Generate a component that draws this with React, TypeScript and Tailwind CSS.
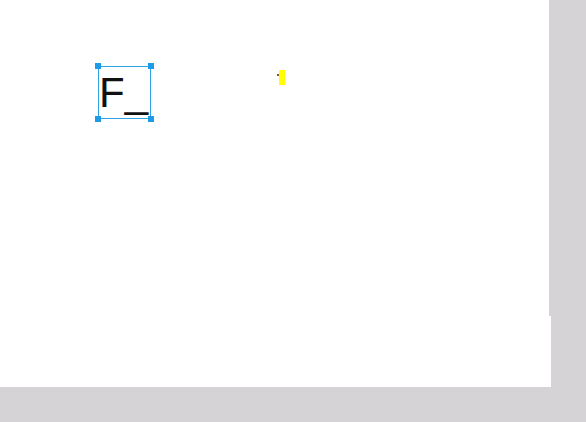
export default function App() {
  return (
    <div className="w-[586px] h-[422px] bg-[#d5d3d6] overflow-hidden">
      <div className="w-[549px] h-[316px] bg-white relative">
        {/* text box with selection handles */}
        <div className="absolute left-[98px] top-[66px] w-[53px] h-[53px] border border-[#2fa3e0] pt-[5px]">
          <span
            className="block text-[42px] leading-none text-[#111]"
            style={{ fontFamily: '"Liberation Sans", Arial, sans-serif' }}
          >
            F_
          </span>
          <div className="absolute -left-[4px] -top-[4px] w-[6px] h-[6px] bg-[#1b9be8]" />
          <div className="absolute -right-[4px] -top-[4px] w-[6px] h-[6px] bg-[#1b9be8]" />
          <div className="absolute -left-[4px] -bottom-[4px] w-[6px] h-[6px] bg-[#1b9be8]" />
          <div className="absolute -right-[4px] -bottom-[4px] w-[6px] h-[6px] bg-[#1b9be8]" />
        </div>
        {/* yellow caret marker */}
        <div className="absolute left-[277px] top-[70px] flex items-start gap-0">
          <div className="mt-[4px] w-[2px] h-[2px] bg-[#8a5a00]" />
          <div className="w-[6px] h-[15px] bg-[#ffff00]" />
        </div>
      </div>
      <div className="w-[551px] h-[71px] bg-white" />
    </div>
  );
}
